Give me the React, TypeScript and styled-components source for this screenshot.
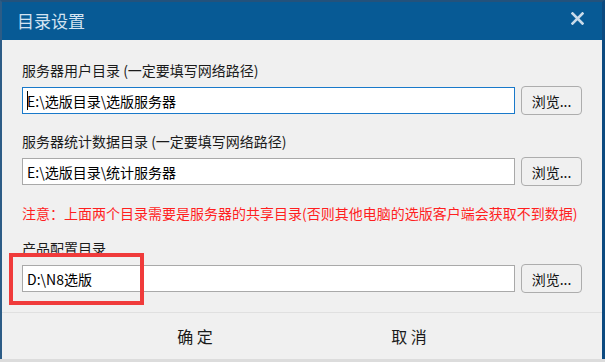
import React from "react";
import styled, { createGlobalStyle } from "styled-components";

const Global = createGlobalStyle`
  html, body { margin: 0; padding: 0; }
  body {
    background: #dcdcdc;
    width: 605px;
    height: 362px;
    overflow: hidden;
    font-family: "Noto Sans CJK SC", "Noto Sans", sans-serif;
  }
`;

const Window = styled.div`
  position: relative;
  box-sizing: border-box;
  width: 605px;
  height: 359px;
  background: #f0f0f0;
  border-top: 2px solid #23527c;
  border-left: 2px solid #2c5c86;
  border-right: 3px solid #0c4a80;
  display: flex;
  flex-direction: column;
`;

const TitleBar = styled.div`
  height: 38px;
  flex: none;
  background: #075a95;
  display: flex;
  align-items: center;
  justify-content: space-between;
  padding: 0 18px 0 15px;
`;

const Title = styled.div`
  color: #d3e3f1;
  font-size: 17px;
  line-height: 38px;
`;

const Close = styled.svg`
  width: 13px;
  height: 13px;
  margin-top: -5px;
`;

const Body = styled.div`
  flex: 1;
  display: flex;
  flex-direction: column;
  padding: 20px 20px 0 20px;
`;

const Field = styled.div<{ $gap: number }>`
  display: flex;
  flex-direction: column;
  margin-bottom: ${(p) => p.$gap}px;
`;

const Label = styled.div`
  font-size: 14px;
  line-height: 20px;
  height: 20px;
  color: #1b1b1b;
  margin-bottom: 6px;
  white-space: nowrap;
`;

const Row = styled.div`
  display: flex;
  align-items: center;
  gap: 6px;
  height: 29px;
`;

const TextBox = styled.div<{ $focused?: boolean }>`
  box-sizing: border-box;
  flex: 1;
  height: 27px;
  background: #ffffff;
  border: 1px solid ${(p) => (p.$focused ? "#1979ca" : "#a9a9a9")};
  padding: 0 4px;
  display: flex;
  align-items: center;
  font-size: 14px;
  color: #000;
  white-space: nowrap;
`;

const Caret = styled.span`
  display: inline-block;
  width: 1px;
  height: 19px;
  background: #000;
  margin-right: -1px;
`;

const BrowseButton = styled.div`
  box-sizing: border-box;
  width: 61px;
  height: 29px;
  border: 1px solid #adadad;
  border-radius: 4px;
  background: #f0f0f0;
  display: flex;
  align-items: center;
  justify-content: center;
  font-size: 14px;
  color: #111;
`;

const Note = styled.div`
  font-size: 14px;
  line-height: 20px;
  color: #ff1f1f;
  white-space: nowrap;
  margin-bottom: 15px;
`;

const Footer = styled.div`
  flex: none;
  height: 46px;
  border-top: 1px solid #e0e0e0;
  display: flex;
  align-items: center;
  justify-content: center;
  gap: 94px;
`;

const FooterButton = styled.div`
  width: 120px;
  text-align: center;
  font-size: 16px;
  color: #1a1a1a;
  white-space: pre;
`;

const Highlight = styled.div`
  position: absolute;
  left: 7px;
  top: 251px;
  width: 135px;
  height: 52px;
  box-sizing: border-box;
  border: 4px solid #f03b3b;
  pointer-events: none;
`;

export default function App() {
  return (
    <>
      <Global />
      <Window>
        <TitleBar>
          <Title>目录设置</Title>
          <Close viewBox="0 0 13 13">
            <path d="M1.5 1.5 L11.5 11.5 M11.5 1.5 L1.5 11.5" stroke="#c9dbea" strokeWidth="2.6" strokeLinecap="square" fill="none" />
          </Close>
        </TitleBar>
        <Body>
          <Field $gap={16}>
            <Label>服务器用户目录 (一定要填写网络路径)</Label>
            <Row>
              <TextBox $focused>
                <Caret />
                E:\选版目录\选版服务器
              </TextBox>
              <BrowseButton>浏览...</BrowseButton>
            </Row>
          </Field>
          <Field $gap={17}>
            <Label>服务器统计数据目录 (一定要填写网络路径)</Label>
            <Row>
              <TextBox>E:\选版目录\统计服务器</TextBox>
              <BrowseButton>浏览...</BrowseButton>
            </Row>
          </Field>
          <Note>注意：上面两个目录需要是服务器的共享目录(否则其他电脑的选版客户端会获取不到数据)</Note>
          <Field $gap={0}>
            <Label>产品配置目录</Label>
            <Row>
              <TextBox>D:\N8选版</TextBox>
              <BrowseButton>浏览...</BrowseButton>
            </Row>
          </Field>
        </Body>
        <Footer>
          <FooterButton>确 定</FooterButton>
          <FooterButton>取 消</FooterButton>
        </Footer>
        <Highlight />
      </Window>
    </>
  );
}
